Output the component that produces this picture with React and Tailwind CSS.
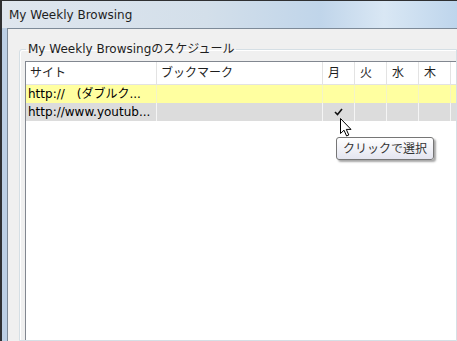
import React from "react";

const font = { fontFamily: '"DejaVu Sans", "Noto Sans CJK JP", sans-serif' };

const days = ["月", "火", "水", "木"];

const rows = [
  { site: "http://　(ダブルク...", bg: "bg-[#ffffa0]", line: "border-[#f4f4c8]", check: null },
  { site: "http://www.youtub...", bg: "bg-[#dcdcdc]", line: "border-[#f5f5f5]", check: 0 },
];

function Check() {
  return (
    <svg width="9" height="8" viewBox="0 0 9 8">
      <path d="M1 4 L3.5 6.5 L8 1" fill="none" stroke="#111" strokeWidth="1.6" />
    </svg>
  );
}

function Cursor() {
  return (
    <svg width="12" height="19" viewBox="0 0 12 19">
      <path
        d="M0.5 0.5 L0.5 15.5 L4 12.2 L6.6 18 L8.8 17 L6.3 11.4 L11 11.4 Z"
        fill="#fff"
        stroke="#000"
        strokeWidth="1"
        strokeLinejoin="miter"
      />
    </svg>
  );
}

export default function App() {
  return (
    <div className="w-[457px] h-[341px] overflow-hidden bg-[#2f3032] pl-[2px] pt-px flex flex-col text-[12px] text-black" style={font}>
      <div className="h-[27px] flex items-center pl-[7px] text-[12px] text-[#1e1e1e] bg-[linear-gradient(90deg,#dfe6ee_0%,#d3dfea_45%,#c0d5ea_70%,#d9e7f4_84%,#bed5ec_100%)]">
        My Weekly Browsing
      </div>
      <div className="flex-1 flex bg-[#bccfe4] pl-[5px]">
        <div className="flex-1 flex flex-col border-l border-t border-[#7d8a98] bg-[#f0f0f0] pl-[11px] pt-[12px]">
          <fieldset className="flex-1 flex flex-col border border-[#d5dfe5] rounded-tl-[3px] shadow-[inset_1px_1px_0_#ffffff] pl-[5px] pt-[4px] min-w-0">
            <legend className="ml-[1px] px-[2px] leading-[16px] text-[#1e1e1e] whitespace-nowrap">
              My Weekly Browsingのスケジュール
            </legend>
            <div className="flex-1 border-l border-t border-[#828790] bg-white relative">
              <div className="flex h-[23px] border-b border-[#e3e3e3] bg-white text-[#1e1e1e]">
                <div className="w-[131px] shrink-0 border-r border-[#e3e3e3] pl-[4px] flex items-center">サイト</div>
                <div className="w-[166px] shrink-0 border-r border-[#e3e3e3] pl-[4px] flex items-center">ブックマーク</div>
                {days.map((d) => (
                  <div key={d} className="w-[32px] shrink-0 border-r border-[#e3e3e3] pl-[5px] flex items-center">{d}</div>
                ))}
                <div className="flex-1" />
              </div>
              {rows.map((r, i) => (
                <div key={i} className={`flex h-[18px] ${r.bg}`}>
                  <div className={`w-[131px] shrink-0 border-r ${r.line} pl-[2px] flex items-center whitespace-nowrap overflow-hidden`}>
                    {r.site}
                  </div>
                  <div className={`w-[166px] shrink-0 border-r ${r.line}`} />
                  {days.map((d, j) => (
                    <div key={d} className={`w-[32px] shrink-0 border-r ${r.line} flex items-center justify-center`}>
                      {r.check === j ? <Check /> : null}
                    </div>
                  ))}
                  <div className="flex-1" />
                </div>
              ))}
              <div className="absolute left-[314px] top-[56px]">
                <Cursor />
              </div>
              <div className="absolute left-[310px] top-[75px] w-[98px] h-[23px] rounded-[3px] border border-[#767676] bg-[linear-gradient(180deg,#ffffff_0%,#e4e5f0_100%)] shadow-[2px_2px_2px_rgba(0,0,0,0.35)] flex items-center pl-[6px] text-[#333] whitespace-nowrap">
                クリックで選択
              </div>
            </div>
          </fieldset>
        </div>
      </div>
    </div>
  );
}
